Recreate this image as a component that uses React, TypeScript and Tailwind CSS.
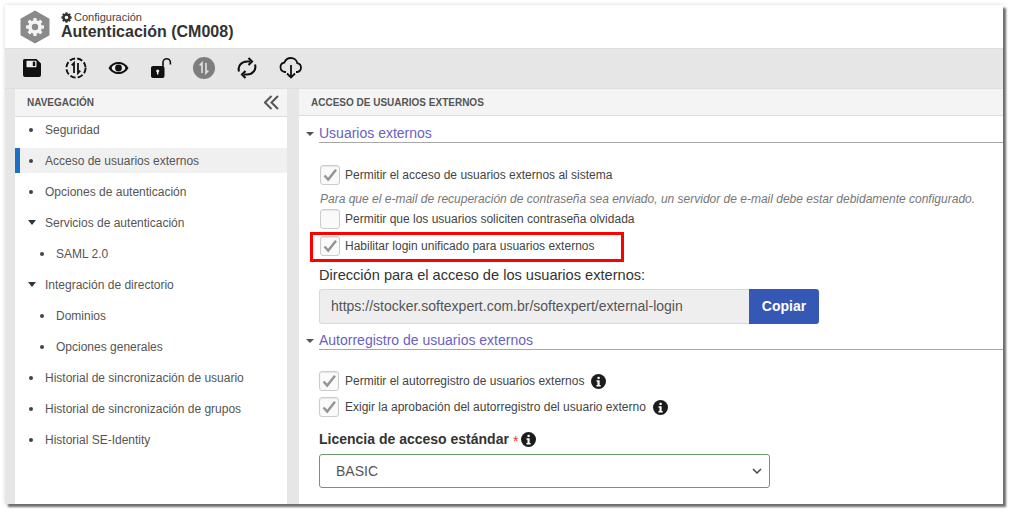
import React from "react";

const font = { fontFamily: '"Liberation Sans", Arial, sans-serif' };

function Check({ checked = true }: { checked?: boolean }) {
  return (
    <span className="flex h-[20px] w-[20px] shrink-0 items-center justify-center rounded-[3px] border border-[#cccccc] bg-[#fafafa] shadow-[inset_0_1px_1px_rgba(0,0,0,0.08)]">
      {checked && (
        <svg width="16" height="14" viewBox="0 0 16 14">
          <path d="M2.5 7.5 L6.2 11.5 L14 1.8" fill="none" stroke="#959595" strokeWidth="2.5" />
        </svg>
      )}
    </span>
  );
}

function Info({ size = 15 }: { size?: number }) {
  return (
    <svg width={size} height={size} viewBox="0 0 16 16" className="shrink-0">
      <circle cx="8" cy="8" r="8" fill="#1c1c1c" />
      <rect x="6.9" y="3" width="2.4" height="2.4" rx="0.6" fill="#fff" />
      <path d="M5.9 6.7h3.3v5h1.1v1.5H5.8v-1.5h1.1V8.2h-1z" fill="#fff" />
    </svg>
  );
}

function Nav({ label, indent = false, caret = false, active = false }: { label: string; indent?: boolean; caret?: boolean; active?: boolean }) {
  return (
    <div className={`relative flex h-[25px] items-center text-[12px] text-[#555] ${active ? "bg-[#f0f0f0]" : ""}`}>
      {active && <span className="h-full w-[5px] bg-[#1c6fc4]" />}
      <span className={`flex items-center justify-start ${active ? "ml-[8px] w-[17px]" : indent ? "ml-[24px] w-[17px]" : "ml-[13px] w-[17px]"}`}>
        {caret ? (
          <span className="h-0 w-0 border-x-[4px] border-t-[5px] border-x-transparent border-t-[#333]" />
        ) : (
          <span className="ml-[1px] h-[4px] w-[4px] rounded-full bg-[#444]" />
        )}
      </span>
      <span>{label}</span>
    </div>
  );
}

function Section({ title }: { title: string }) {
  return (
    <div className="flex items-end">
      <span className="mb-[7px] ml-[7px] mr-[5px] h-0 w-0 border-x-[4px] border-t-[4px] border-x-transparent border-t-[#555]" />
      <div className="flex-1 border-b border-[#a8a8a8] text-[14px] leading-[18px] text-[#6a5fc4]">{title}</div>
    </div>
  );
}

function CheckRow({ label, checked = true, info = false }: { label: string; checked?: boolean; info?: boolean }) {
  return (
    <div className={`flex items-center text-[12px] leading-[20px] text-[#444] ${info ? "gap-[6px]" : "gap-[5px]"}`}>
      <Check checked={checked} />
      <span>{label}</span>
      {info && <span className="ml-[1px]"><Info /></span>}
    </div>
  );
}

function Toolbar() {
  const s = "#111";
  return (
    <div className="flex h-[41px] items-center border-y border-[#dedede] bg-[#e6e6e6] pb-[2px] pl-[16px]">
      <div className="flex w-[22px] justify-center">
        <svg width="20" height="20" viewBox="0 0 20 20">
          <path d="M2.5 1h12L19 5.5V17a2 2 0 0 1-2 2H3a2 2 0 0 1-2-2V2.5A1.5 1.5 0 0 1 2.5 1z" fill={s} />
          <rect x="4.5" y="2.8" width="10" height="6.4" rx="0.8" fill="#eee" />
          <rect x="10.8" y="3.6" width="2.4" height="4.4" fill={s} />
        </svg>
      </div>
      <div className="ml-[22px] flex w-[22px] justify-center">
        <svg width="22" height="22" viewBox="0 0 22 22" fill="none" stroke={s}>
          <circle cx="11" cy="11" r="9.6" strokeWidth="1.9" strokeDasharray="5.5 2.2" />
          <path d="M9 16V6L6.7 8.3M13 6v10l2.3-2.3" strokeWidth="1.8" />
        </svg>
      </div>
      <div className="ml-[20px] flex w-[22px] justify-center">
        <svg width="21" height="14" viewBox="0 0 21 14">
          <path d="M.5 7C3 2.8 6.5 1 10.5 1s7.500 1.800 10 6c-2.500 4.200-6 6-10 6S3 11.200.5 7z" fill={s} />
          <ellipse cx="10.500" cy="7" rx="6.800" ry="4" fill="#eee" />
          <circle cx="10.500" cy="7" r="3.400" fill={s} />
        </svg>
      </div>
      <div className="ml-[21px] flex w-[22px] justify-center">
        <svg width="22" height="22" viewBox="0 0 22 22">
          <rect x="1" y="9" width="13.500" height="12" rx="2" fill={s} />
          <path d="M13 9.500V5.500a3.700 3.700 0 0 1 7.400 0V7.500" fill="none" stroke={s} strokeWidth="1.600" />
          <circle cx="7.700" cy="14" r="1.600" fill="#eee" />
          <rect x="7" y="14" width="1.400" height="3.500" fill="#eee" />
        </svg>
      </div>
      <div className="ml-[21px] flex w-[22px] justify-center">
        <svg width="22" height="22" viewBox="0 0 22 22" fill="none">
          <circle cx="11" cy="11" r="11" fill="#7e7e7e" />
          <path d="M9 16V6L6.700 8.300M13 6v10l2.300-2.300" stroke="#dcdcdc" strokeWidth="1.700" />
        </svg>
      </div>
      <div className="ml-[21px] flex w-[22px] justify-center">
        <svg width="20" height="22" viewBox="0 0 20 22" fill="none" stroke={s} strokeWidth="2.100">
          <path d="M2 14.500C.5 9.500 4 4.500 10 4.500h3" />
          <path d="M18 7.500c1.500 5-2 10-8 10H7" />
          <path d="M11.500 1 15 4.500l-3.500 3.500M8.500 14 5 17.500 8.500 21" />
        </svg>
      </div>
      <div className="ml-[21px] flex w-[24px] justify-center">
        <svg width="24" height="22" viewBox="0 0 24 22" fill="none" stroke={s} strokeWidth="1.800">
          <path d="M7 15H6a4.800 4.800 0 0 1-.6-9.500C6.500 2.800 9 1 11.800 1c3.400 0 6 2.300 6.500 5.200A4.500 4.500 0 0 1 18.500 15H17" />
          <path d="M12 8v12M8 16.500l4 4 4-4" />
        </svg>
      </div>
    </div>
  );
}

export default function App() {
  return (
    <div className="h-[513px] w-[1011px] overflow-hidden bg-white pl-[5px] pt-[5px]" style={font}>
      <div className="flex h-[499px] w-[998px] flex-col bg-[#e6e6e6] shadow-[3px_3px_2px_#6e6e6e,0_0_4px_#d8d8d8]">
        <header className="flex h-[43px] items-center bg-white pl-[15px]">
          <svg width="30" height="34" viewBox="0 0 30 34">
            <path d="M15 0.500 29.500 8.700V25.300L15 33.500.5 25.300V8.700z" fill="#8a8a8a" />
            <g fill="#f4f4f4">
              <circle cx="15" cy="17" r="6.800" />
              {[0, 45, 90, 135].map((a) => (
                <rect key={a} x="13.300" y="8" width="3.400" height="18" rx="0.800" transform={`rotate(${a} 15 17)`} />
              ))}
            </g>
            <circle cx="15" cy="17" r="3.200" fill="#8a8a8a" />
          </svg>
          <div className="ml-[11px] flex flex-col">
            <div className="flex items-center gap-[2px] text-[11px] leading-[11px] text-[#444]">
              <svg width="11" height="11" viewBox="0 0 16 16">
                <g fill="#333">
                  {[0, 45, 90, 135].map((a) => (
                    <rect key={a} x="6.300" y="0.500" width="3.400" height="15" rx="0.800" transform={`rotate(${a} 8 8)`} />
                  ))}
                  <circle cx="8" cy="8" r="5.800" />
                </g>
                <circle cx="8" cy="8" r="2.500" fill="#fff" />
              </svg>
              <span>Configuración</span>
            </div>
            <div className="text-[16px] font-bold leading-[18px] text-[#333]">Autenticación (CM008)</div>
          </div>
        </header>
        <Toolbar />
        <main className="flex min-h-0 flex-1 pl-[10px]">
          <aside className="flex w-[272px] shrink-0 flex-col bg-white">
            <div className="flex h-[28px] items-center justify-between border-b border-[#dcdcdc] bg-[#f4f4f4] pl-[12px] pr-[8px] text-[10px] font-bold text-[#555]">
              <span>NAVEGACIÓN</span>
              <svg width="15" height="15" viewBox="0 0 15 15" fill="none" stroke="#555" strokeWidth="2">
                <path d="M7.500 1 1 7.500 7.500 14M14 1 7.500 7.500 14 14" />
              </svg>
            </div>
            <div className="flex flex-col gap-[6px]">
              <Nav label="Seguridad" />
              <Nav label="Acceso de usuarios externos" active />
              <Nav label="Opciones de autenticación" />
              <Nav label="Servicios de autenticación" caret />
              <Nav label="SAML 2.0" indent />
              <Nav label="Integración de directorio" caret />
              <Nav label="Dominios" indent />
              <Nav label="Opciones generales" indent />
              <Nav label="Historial de sincronización de usuario" />
              <Nav label="Historial de sincronización de grupos" />
              <Nav label="Historial SE-Identity" />
            </div>
          </aside>
          <section className="ml-[12px] flex min-w-0 flex-1 flex-col bg-white">
            <div className="flex h-[27px] shrink-0 items-center border-b border-[#dcdcdc] bg-[#f4f4f4] pl-[12px] text-[10px] font-bold text-[#555]">
              ACCESO DE USUARIOS EXTERNOS
            </div>
            <div className="flex flex-col pt-[8px]">
              <Section title="Usuarios externos" />
              <div className="pl-[21px]">
                <div className="mt-[22px]"><CheckRow label="Permitir el acceso de usuarios externos al sistema" /></div>
                <p className="mt-[7px] text-[12px] italic leading-[14px] text-[#777]">
                  Para que el e-mail de recuperación de contraseña sea enviado, un servidor de e-mail debe estar debidamente configurado.
                </p>
                <div className="mt-[3px]"><CheckRow label="Permitir que los usuarios soliciten contraseña olvidada" checked={false} /></div>
                <div className="relative mt-[7px]">
                  <CheckRow label="Habilitar login unificado para usuarios externos" />
                  <div className="absolute -top-[4px] -left-[10px] h-[30px] w-[314px] border-[3px] border-[#f00]" />
                </div>
                <div className="-ml-[1px] mt-[10px] text-[14.600px] leading-[18px] text-[#333]">Dirección para el acceso de los usuarios externos:</div>
                <div className="-ml-[1px] mt-[5px] flex h-[35px] w-[500px]">
                  <div className="flex flex-1 items-center rounded-l-[3px] border border-r-0 border-[#d8d8d8] bg-[#eeeeee] pl-[11px] text-[14px] text-[#555]">
                    https://stocker.softexpert.com.br/softexpert/external-login
                  </div>
                  <div className="flex w-[70px] items-center justify-center rounded-r-[3px] bg-[#3558b5] text-[14px] font-bold text-white">Copiar</div>
                </div>
              </div>
              <div className="mt-[7px]"><Section title="Autorregistro de usuarios externos" /></div>
              <div className="pl-[20px]">
                <div className="mt-[21px]"><CheckRow label="Permitir el autorregistro de usuarios externos" info /></div>
                <div className="mt-[6px]"><CheckRow label="Exigir la aprobación del autorregistro del usuario externo" info /></div>
                <div className="mt-[13px] flex h-[18px] items-center text-[14px] font-bold leading-[18px] text-[#333]">
                  <span>Licencia de acceso estándar</span>
                  <span className="ml-[4px] translate-y-[2px] font-normal text-[#f33]">*</span>
                  <span className="ml-[3px]"><Info /></span>
                </div>
                <div className="mt-[6px] flex h-[34px] w-[451px] items-center justify-between rounded-[3px] border border-[#6b9a6b] bg-white pl-[16px] pr-[7px] text-[14px] text-[#555]">
                  <span>BASIC</span>
                  <svg width="10" height="7" viewBox="0 0 10 7" fill="none" stroke="#444" strokeWidth="1.500"><path d="M1 1l4 4 4-4" /></svg>
                </div>
              </div>
            </div>
          </section>
        </main>
      </div>
    </div>
  );
}
